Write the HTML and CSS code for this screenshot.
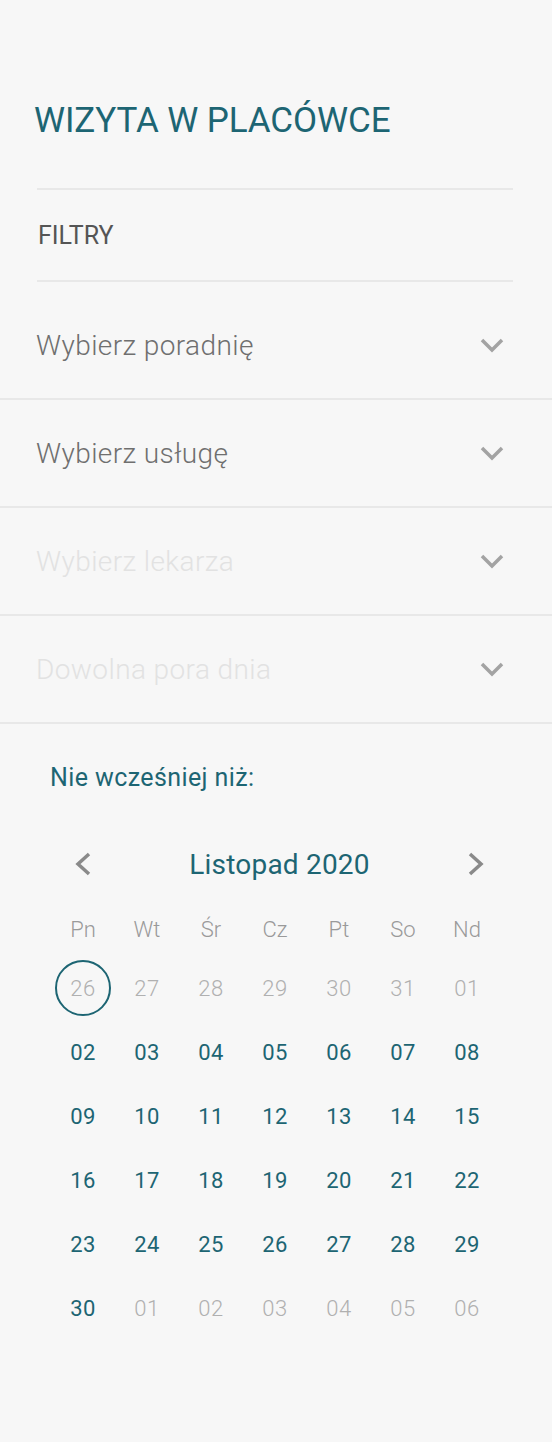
FILE: index.html
```html
<!DOCTYPE html>
<html lang="pl">
<head>
<meta charset="utf-8">
<title>Wizyta w placówce</title>
<link rel="stylesheet" href="styles.css">
</head>
<body>
<div class="page">
  <h1 class="title">WIZYTA W PLACÓWCE</h1>
  <div class="filters"><span>FILTRY</span></div>

  <div class="select"><span class="label">Wybierz poradnię</span><svg class="chev" width="24" height="16" viewBox="0 0 24 16"><polyline points="2,3 12,13 22,3"/></svg></div>
  <div class="select"><span class="label">Wybierz usługę</span><svg class="chev" width="24" height="16" viewBox="0 0 24 16"><polyline points="2,3 12,13 22,3"/></svg></div>
  <div class="select disabled"><span class="label">Wybierz lekarza</span><svg class="chev" width="24" height="16" viewBox="0 0 24 16"><polyline points="2,3 12,13 22,3"/></svg></div>
  <div class="select disabled"><span class="label">Dowolna pora dnia</span><svg class="chev" width="24" height="16" viewBox="0 0 24 16"><polyline points="2,3 12,13 22,3"/></svg></div>

  <div class="cal-section">
    <div class="cal-label">Nie wcześniej niż:</div>
    <div class="cal-head">
      <svg class="nav" width="18" height="24" viewBox="0 0 18 24"><polyline points="15,2 4,12 15,22"/></svg>
      <span class="month">Listopad 2020</span>
      <svg class="nav" width="18" height="24" viewBox="0 0 18 24"><polyline points="3,2 14,12 3,22"/></svg>
    </div>
    <div class="cal-grid">
      <div class="wd">Pn</div><div class="wd">Wt</div><div class="wd">Śr</div><div class="wd">Cz</div><div class="wd">Pt</div><div class="wd">So</div><div class="wd">Nd</div>

      <div class="day other"><span class="sel">26</span></div><div class="day other">27</div><div class="day other">28</div><div class="day other">29</div><div class="day other">30</div><div class="day other">31</div><div class="day other">01</div>
      <div class="day">02</div><div class="day">03</div><div class="day">04</div><div class="day">05</div><div class="day">06</div><div class="day">07</div><div class="day">08</div>
      <div class="day">09</div><div class="day">10</div><div class="day">11</div><div class="day">12</div><div class="day">13</div><div class="day">14</div><div class="day">15</div>
      <div class="day">16</div><div class="day">17</div><div class="day">18</div><div class="day">19</div><div class="day">20</div><div class="day">21</div><div class="day">22</div>
      <div class="day">23</div><div class="day">24</div><div class="day">25</div><div class="day">26</div><div class="day">27</div><div class="day">28</div><div class="day">29</div>
      <div class="day">30</div><div class="day other">01</div><div class="day other">02</div><div class="day other">03</div><div class="day other">04</div><div class="day other">05</div><div class="day other">06</div>
    </div>
  </div>
</div>
</body>
</html>
```

FILE: styles.css
```css
html, body {
  margin: 0;
  padding: 0;
  background: #f7f7f7;
}

body {
  font-family: Roboto, "Noto Sans", sans-serif;
  width: 552px;
  min-height: 1442px;
}

.page {
  padding-top: 99px;
}

.title {
  margin: 0;
  padding-left: 34px;
  font-size: 35px;
  line-height: 44px;
  font-weight: 400;
  color: #1d6573;
  letter-spacing: -0.1px;
}

.filters {
  margin: 45px 39px 10px 37px;
  height: 90px;
  border-top: 2px solid #e8e8e8;
  border-bottom: 2px solid #e8e8e8;
  display: flex;
  align-items: center;
  padding-left: 1px;
  font-size: 25px;
  color: #555555;
}

.select {
  height: 106px;
  border-bottom: 2px solid #e8e8e8;
  display: flex;
  align-items: center;
  justify-content: space-between;
  padding: 0 48px 0 36px;
}

.select .label {
  font-size: 28px;
  font-weight: 300;
  color: #6f6f6f;
  letter-spacing: 0.4px;
}

.select.disabled .label {
  color: #e2e2e2;
}

.chev polyline {
  fill: none;
  stroke: #a3a3a3;
  stroke-width: 3.5;
}

.cal-section {
  padding-top: 36px;
}

.cal-label {
  padding-left: 50px;
  font-size: 25px;
  line-height: 36px;
  color: #1d6573;
  font-weight: 400;
  letter-spacing: 0.4px;
}

.cal-head {
  margin-top: 46px;
  height: 44px;
  display: flex;
  align-items: center;
  justify-content: space-between;
  padding: 0 67px 0 74px;
}

.month {
  font-size: 28px;
  color: #1d6573;
  letter-spacing: 0.2px;
}

.nav polyline {
  fill: none;
  stroke: #8a8a8a;
  stroke-width: 3.5;
}

.cal-grid {
  margin: 21px 0 0 51px;
  width: 448px;
  display: grid;
  grid-template-columns: repeat(7, 64px);
  grid-template-rows: 49px;
  grid-auto-rows: 64px;
}

.wd {
  align-self: start;
  height: 44px;
  display: flex;
  align-items: center;
  justify-content: center;
  font-size: 22px;
  font-weight: 300;
  color: #9a9a9a;
}

.day {
  display: flex;
  align-items: center;
  justify-content: center;
  font-size: 22px;
  color: #1d6573;
  letter-spacing: 0.5px;
}

.day.other {
  color: #b0b0b0;
  font-weight: 300;
}

.sel {
  width: 56px;
  height: 56px;
  box-sizing: border-box;
  border: 2px solid #1d6573;
  border-radius: 50%;
  display: flex;
  align-items: center;
  justify-content: center;
}
```
